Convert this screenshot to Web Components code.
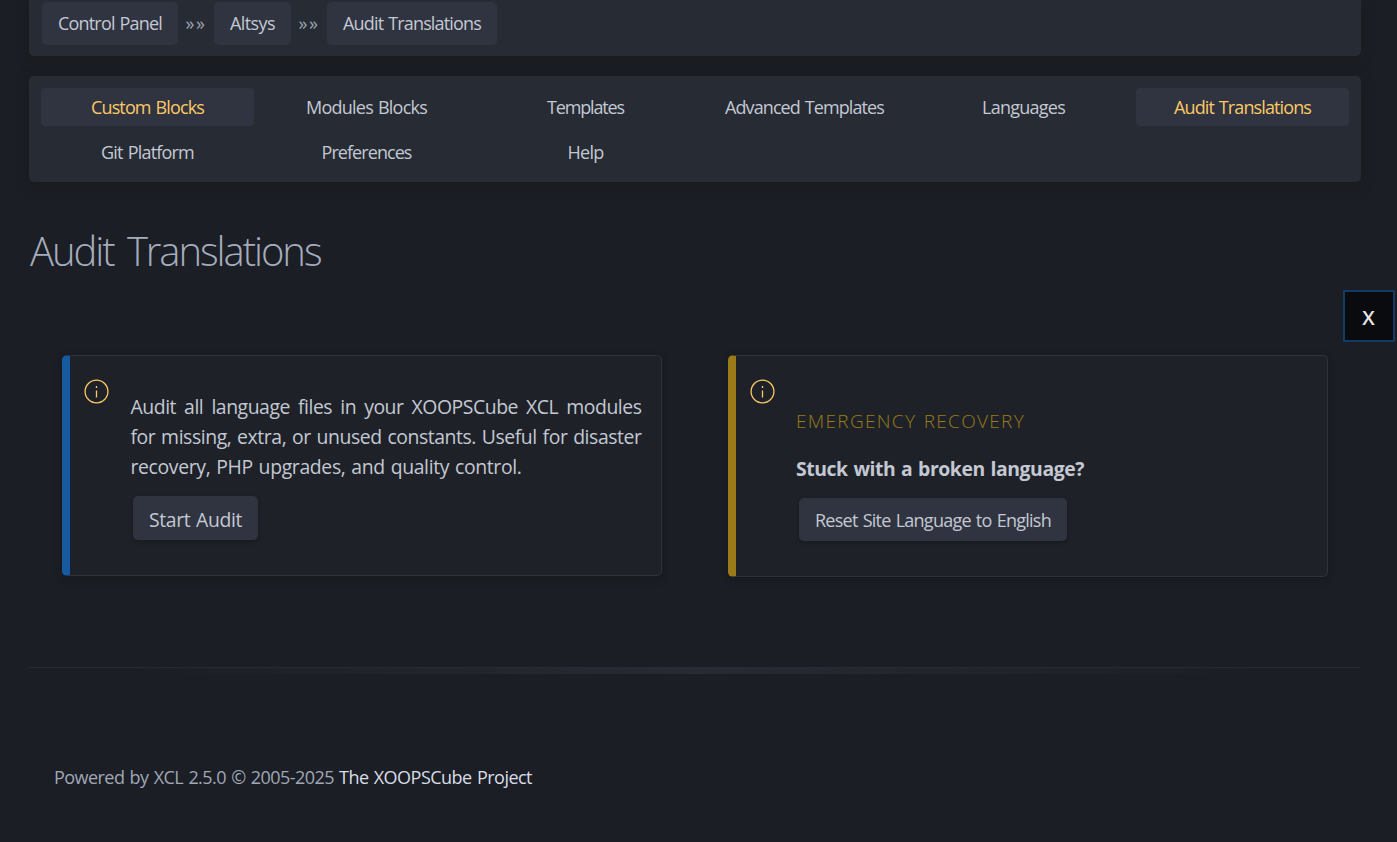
<!DOCTYPE html>
<html lang="en">
<head>
<meta charset="utf-8">
<title>Audit Translations</title>
<style>
html,body{margin:0;height:100%;overflow:hidden;background:#1b1e25}
body{font:18px/27px "Open Sans","Noto Sans",sans-serif;color:#c3c8d3}
</style>
</head>
<body>
<admin-page></admin-page>
<script>
const define = (name, html, base = HTMLElement) => {
  const tpl = document.createElement('template');
  tpl.innerHTML = html;
  customElements.define(name, class extends base {
    constructor() {
      super();
      this.attachShadow({mode: 'open'}).append(tpl.content.cloneNode(true));
    }
  });
};

/* One line of text tracked to an exact measure. */
class FitText extends HTMLElement {
  constructor() {
    super();
    this.attachShadow({mode: 'open'}).innerHTML =
      '<style>:host{display:inline-block;white-space:nowrap;word-spacing:.06em}span{display:inline-block}</style><span><slot></slot></span>';
  }
  connectedCallback() {
    const w = +this.getAttribute('w'), span = this.shadowRoot.querySelector('span');
    const n = this.textContent.length;
    const natural = span.getBoundingClientRect().width;
    span.style.letterSpacing = ((w - natural) / n) + 'px';
    this.style.width = w + 'px';
  }
}

define('crumb-link', `<style>
:host{display:block;box-sizing:border-box;height:43px;padding:8px 16px;border-radius:5px;background:#303440}
</style><slot></slot>`);

define('crumb-bar', `<style>
:host{display:flex;box-sizing:border-box;height:56px;padding:2px 13px 11px;border-radius:0 0 5px 5px;background:#272b34;box-shadow:0 4px 12px rgba(27,28,25,.8)}
.s{width:36px;text-align:center;line-height:43px;color:#9aa1ae}
</style>
<crumb-link><fit-text w="104">Control Panel</fit-text></crumb-link><span class="s"><fit-text w="21">»»</fit-text></span>
<crumb-link><fit-text w="45">Altsys</fit-text></crumb-link><span class="s"><fit-text w="21">»»</fit-text></span>
<crumb-link><fit-text w="138">Audit Translations</fit-text></crumb-link>`);

define('nav-item', `<style>
:host{display:block;height:38px;line-height:39px;text-align:center;border-radius:4px}
:host([active]){background:#303440;color:#fcc965}
</style><slot></slot>`);

define('nav-panel', `<style>
:host{display:grid;grid-template-columns:repeat(6,213px);gap:7px 6px;align-content:start;box-sizing:border-box;height:106px;padding:12px;border-radius:5px;background:#272b34;box-shadow:0 4px 12px rgba(27,28,25,.8)}
</style>
<nav-item active><fit-text w="113">Custom Blocks</fit-text></nav-item>
<nav-item><fit-text w="121">Modules Blocks</fit-text></nav-item>
<nav-item><fit-text w="77">Templates</fit-text></nav-item>
<nav-item><fit-text w="159">Advanced Templates</fit-text></nav-item>
<nav-item><fit-text w="83">Languages</fit-text></nav-item>
<nav-item active><fit-text w="137">Audit Translations</fit-text></nav-item>
<nav-item><fit-text w="93">Git Platform</fit-text></nav-item>
<nav-item><fit-text w="90">Preferences</fit-text></nav-item>
<nav-item><fit-text w="36">Help</fit-text></nav-item>`);

define('info-icon', `<style>:host{display:block;width:25px;height:25px}svg{display:block}</style>
<svg width="25" height="25" viewBox="0 0 25 25" fill="none" stroke="#fcc965" stroke-width="1.3"><circle cx="12.5" cy="12.5" r="11.4"/><path d="M12.5 11.5v7M12.5 7v2"/></svg>`);

define('action-button', `<style>
:host{display:block;width:max-content;box-sizing:border-box;padding:0 16px;margin-left:3px;border-radius:5px;background:#303440;box-shadow:0 2px 4px rgba(0,0,0,.25)}
</style><slot></slot>`);

define('notice-card', `<style>
:host{display:grid;grid-template-columns:60px 1fr;box-sizing:border-box;width:600px;border:1px solid #2e323b;border-left:8px solid var(--accent);border-radius:5px;background:#1e2228;box-shadow:0 3px 8px rgba(15,15,15,.3)}
info-icon{margin:23px 0 0 14px}
</style><info-icon></info-icon><div><slot></slot></div>`);

define('fade-rule', `<style>
:host{display:block;height:7px;box-sizing:border-box;border-top:1px solid #262a32;background:linear-gradient(90deg,#1b1e25 8%,#282b33 50%,#1b1e25 92%)}
</style>`);

define('close-tab', `<style>
:host{position:absolute;left:1343px;top:290px;width:52px;height:52px;box-sizing:border-box;padding-right:1px;border:2px solid #143b66;background:#090b0e;color:#e5e5e5;font-size:20px;font-weight:600;line-height:52px;text-align:center}
</style><slot></slot>`);

define('admin-page', `<style>
:host{display:block;box-sizing:border-box;width:1397px;height:842px;padding:0 36px 0 29px;position:relative}
nav-panel{margin-top:20px}
h1{margin:40px 0 0 1px;font-size:40px;font-weight:300;line-height:58px;color:#a5adbd}
h1 fit-text{word-spacing:5px}
.cards{display:flex;align-items:flex-start;gap:66px;margin:75px 33px 0}
.blue{--accent:#165a9f;height:221px}
.gold{--accent:#9a7b17;height:222px}
.copy{padding-top:36px;margin-left:.5px;font-size:19.4px;line-height:30px}
.copy fit-text{display:block}
.copy fit-text:first-child{word-spacing:3.5px}
.b1{font-size:19.4px;height:44px;line-height:48px;margin-top:14px}
h2{margin:50px 0 0;font-size:19px;font-weight:300;line-height:30px;color:#9a7b17}
.q{font-size:19.4px;font-weight:700;line-height:30px;margin-top:18px}
.b2{height:43px;line-height:45px;margin-top:14px}
fade-rule{margin:90px 0 0}
footer{margin:90px 0 0 25px;display:flex;gap:5px;color:#a0a7b5}
b{font-weight:400;color:#d9dde6}
</style>
<crumb-bar></crumb-bar>
<nav-panel></nav-panel>
<h1><fit-text w="290.5">Audit Translations</fit-text></h1>
<div class="cards">
<notice-card class="blue"><div class="copy"><fit-text w="511">Audit all language files in your XOOPSCube XCL modules</fit-text><fit-text w="511">for missing, extra, or unused constants. Useful for disaster</fit-text><fit-text w="391">recovery, PHP upgrades, and quality control.</fit-text></div>
<action-button class="b1"><fit-text w="93">Start Audit</fit-text></action-button></notice-card>
<notice-card class="gold"><h2><fit-text w="229">EMERGENCY RECOVERY</fit-text></h2>
<div class="q"><fit-text w="288">Stuck with a broken language?</fit-text></div>
<action-button class="b2"><fit-text w="236">Reset Site Language to English</fit-text></action-button></notice-card>
</div>
<fade-rule></fade-rule>
<footer><fit-text w="280">Powered by XCL 2.5.0 © 2005-2025</fit-text><b><fit-text w="193">The XOOPSCube Project</fit-text></b></footer>
<close-tab>X</close-tab>`);

customElements.define('fit-text', FitText);
</script>
</body>
</html>
